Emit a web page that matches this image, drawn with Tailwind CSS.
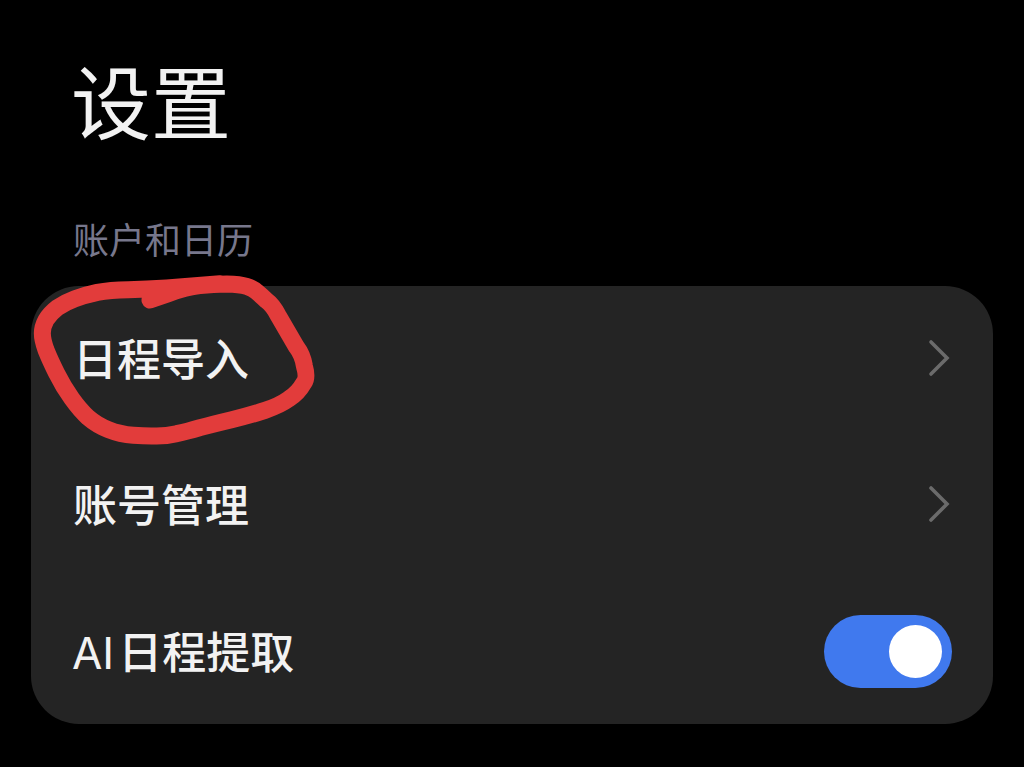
<!DOCTYPE html>
<html lang="zh-CN">
<head>
<meta charset="utf-8">
<meta name="viewport" content="width=device-width, initial-scale=1">
<title>设置</title>
<script src="https://cdn.jsdelivr.net/npm/@tailwindcss/browser@4"></script>
</head>
<body class="min-h-screen bg-black font-['Noto_Sans_CJK_SC',sans-serif] text-[#f2f2f2]">
<main class="px-[31px] pt-[42px]">
  <h1 class="px-10 text-[80px] leading-28">设置</h1>
  <section aria-labelledby="accounts">
    <h2 id="accounts" class="px-[42px] pt-15 pb-[23px] text-[36px] leading-[49px] text-[#77778c]">账户和日历</h2>
    <div class="relative rounded-[48px] bg-[#242424] text-[44px] leading-16 font-medium">
      <a href="#import" class="flex h-[146px] items-center justify-between px-[42px]">
        <span class="pb-1">日程导入</span>
        <svg class="h-10 w-6" viewBox="0 0 24 40" fill="none" stroke="#6b6b6b" stroke-width="3.6" stroke-linecap="round" aria-hidden="true"><path d="M4 3L20 19L4 35"/></svg>
      </a>
      <a href="#manage" class="flex h-[146px] items-center justify-between px-[42px]">
        <span class="pb-1">账号管理</span>
        <svg class="h-10 w-6" viewBox="0 0 24 40" fill="none" stroke="#6b6b6b" stroke-width="3.6" stroke-linecap="round" aria-hidden="true"><path d="M4 3L20 19L4 35"/></svg>
      </a>
      <label class="flex h-[146px] items-center justify-between px-[41px]">
        <span><span class="mr-1 font-['Inter',sans-serif] font-normal">AI</span>日程提取</span>
        <input type="checkbox" role="switch" checked class="flex h-[73px] w-32 appearance-none items-center rounded-full bg-[#555] px-[10px] before:size-[53px] before:rounded-full before:bg-white before:content-[''] checked:justify-end checked:bg-[#4079ee]">
      </label>
      <!-- Hand-drawn ring around the import entry -->
      <svg class="pointer-events-none absolute -top-[21px] -left-[11px] h-[190px] w-[310px]" viewBox="0 0 930 570" fill="none" stroke="#e23c3b" stroke-width="51" stroke-linecap="round" stroke-linejoin="round" aria-hidden="true">
        <path d="M390 105L445 86Q500 66 540 62Q580 57 620 57Q660 58 680 64Q700 70 712 82Q725 93 740 107Q758 120 775 152L829 245Q848 270 853 302Q863 338 852 353Q834 385 806 402Q780 421 735 436Q690 451 635 464Q580 477 540 488Q500 500 470 506Q440 513 410 513Q380 514 340 511Q300 508 265 494Q230 480 205 458Q180 435 155 400Q130 365 110 325Q90 285 78 255Q67 225 67 205Q67 185 78 165Q90 145 112 128Q135 112 165 101Q195 90 232 82Q270 75 325 74Q380 73 440 69L600 56"/>
      </svg>
    </div>
  </section>
</main>
</body>
</html>
